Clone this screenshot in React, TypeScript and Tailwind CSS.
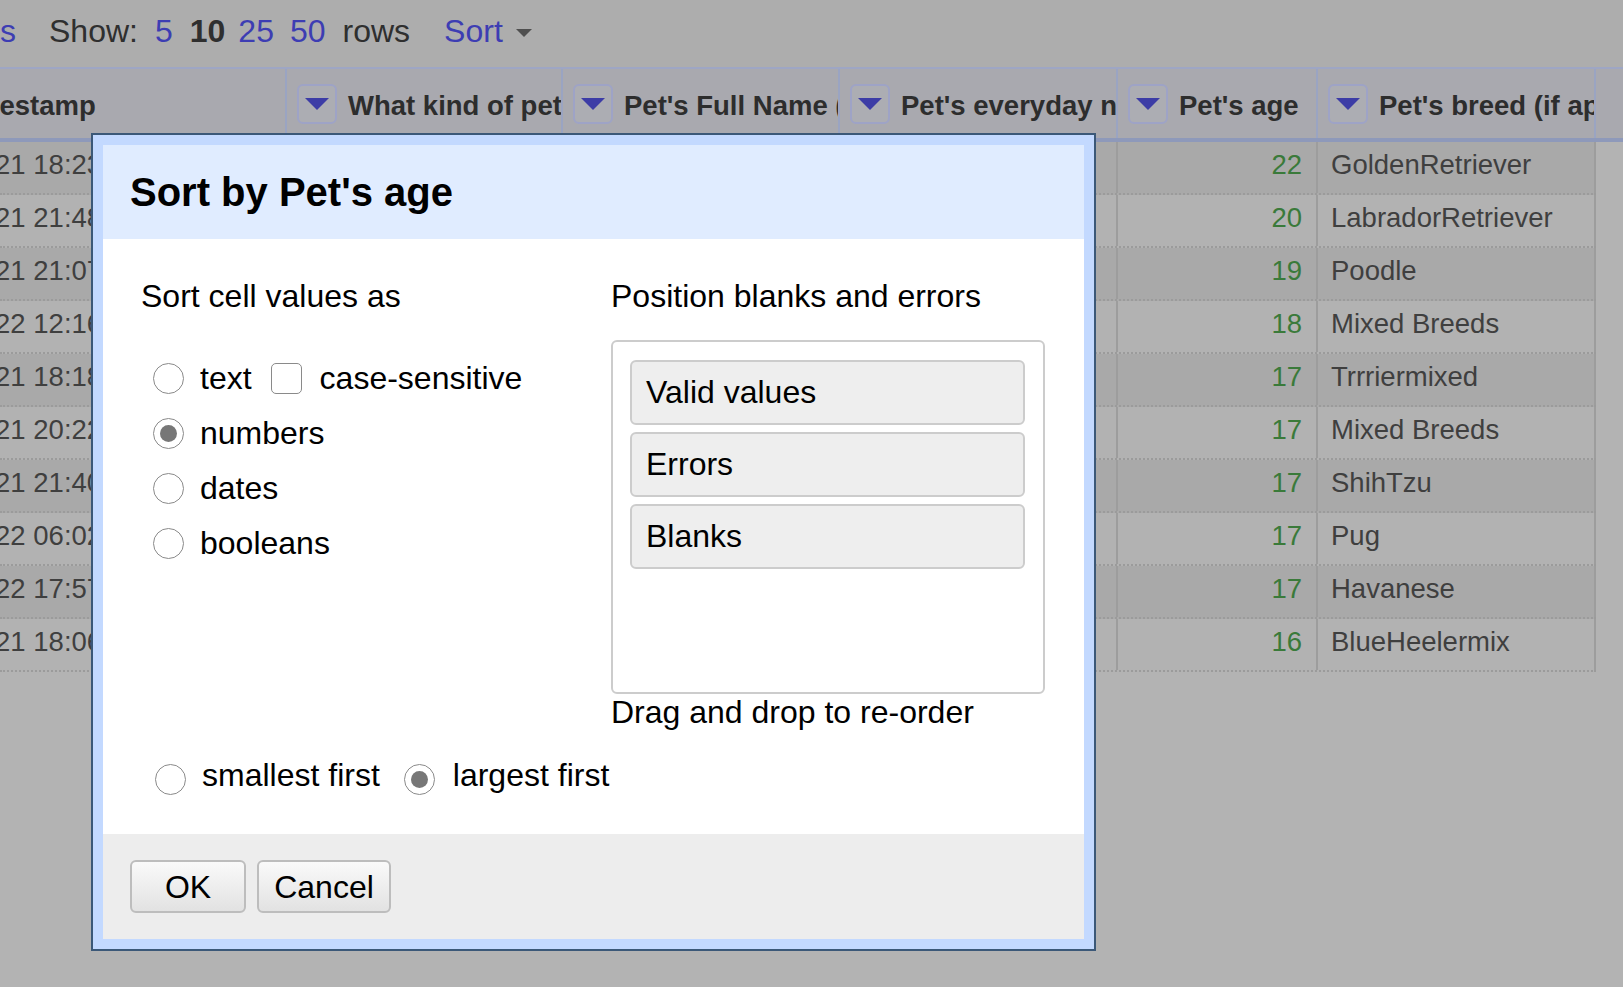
import React from "react";

const rows = [
  { ts: "2021-10-21 18:23:45", kind: "Dog", full: "Max", every: "Max", age: 22, breed: "GoldenRetriever" },
  { ts: "2021-10-21 21:48:12", kind: "Dog", full: "Bella", every: "Bell", age: 20, breed: "LabradorRetriever" },
  { ts: "2021-10-21 21:07:33", kind: "Dog", full: "Coco", every: "Coco", age: 19, breed: "Poodle" },
  { ts: "2021-10-22 12:16:08", kind: "Dog", full: "Buddy", every: "Bud", age: 18, breed: "Mixed Breeds" },
  { ts: "2021-10-21 18:18:51", kind: "Dog", full: "Rocky", every: "Rock", age: 17, breed: "Trrriermixed" },
  { ts: "2021-10-21 20:22:19", kind: "Dog", full: "Lucy", every: "Lu", age: 17, breed: "Mixed Breeds" },
  { ts: "2021-10-21 21:40:02", kind: "Dog", full: "Daisy", every: "Daisy", age: 17, breed: "ShihTzu" },
  { ts: "2021-10-22 06:02:44", kind: "Dog", full: "Otis", every: "Otis", age: 17, breed: "Pug" },
  { ts: "2021-10-22 17:57:30", kind: "Dog", full: "Milo", every: "Milo", age: 17, breed: "Havanese" },
  { ts: "2021-10-21 18:06:27", kind: "Dog", full: "Duke", every: "Duke", age: 16, breed: "BlueHeelermix" },
];

function HeaderButton() {
  return (
    <div className="w-[40px] h-[40px] shrink-0 rounded-[6px] border-2 border-[#9ea3c6] bg-[#acadb3] flex items-center justify-center">
      <svg width="24" height="12" viewBox="0 0 24 12">
        <path d="M0 0H24L12 12Z" fill="#3c3ca6" />
      </svg>
    </div>
  );
}

function HeaderCell({ label, w }: { label: string; w: string }) {
  return (
    <div className={`${w} shrink-0 h-full border-r-2 border-[#9aa4c2] pl-[10px] flex items-center overflow-hidden`}>
      <HeaderButton />
      <span className="ml-[11px] mt-[3px] font-bold text-[27.5px] leading-[31px] text-[#2d2d2d] whitespace-nowrap">
        {label}
      </span>
    </div>
  );
}

function Radio({ checked, className = "" }: { checked?: boolean; className?: string }) {
  return (
    <div
      className={`w-[31px] h-[31px] shrink-0 rounded-full border border-[#8a8a8a] bg-white flex items-center justify-center ${className}`}
    >
      {checked && <div className="w-[17px] h-[17px] rounded-full bg-[#777777]" />}
    </div>
  );
}

export default function App() {
  return (
    <div className="relative w-[1623px] h-[987px] overflow-hidden bg-[#b3b3b3] font-['Liberation_Sans',Arial,sans-serif]">
      {/* top bar */}
      <div className="h-[67px] bg-[#adadad] flex items-center pb-[4px] text-[32px] leading-[37px] text-[#2f2f2f] whitespace-nowrap">
        <span className="text-[#3d3db3]">s</span>
        <span className="ml-[33px]">Show:</span>
        <span className="ml-[17px] text-[#3d3db3]">5</span>
        <span className="ml-[17px] font-bold">10</span>
        <span className="ml-[13px] text-[#3d3db3]">25</span>
        <span className="ml-[16px] text-[#3d3db3]">50</span>
        <span className="ml-[17px]">rows</span>
        <span className="ml-[34px] text-[#3d3db3]">Sort</span>
        <svg className="ml-[13px] mt-[2px]" width="16" height="8" viewBox="0 0 16 8">
          <path d="M0 0H16L8 8Z" fill="#4f4f4f" />
        </svg>
      </div>

      {/* header row */}
      <div className="h-[75px] flex border-t-2 border-t-[#9ea6c4] border-b-4 border-b-[#8e99ba] bg-[#a9a9af]">
        <div className="w-[287px] shrink-0 h-full border-r-2 border-[#9aa4c2] flex items-center overflow-hidden">
          <span className="ml-[-49px] mt-[3px] font-bold text-[27.5px] leading-[31px] text-[#2d2d2d] whitespace-nowrap">
            Timestamp
          </span>
        </div>
        <HeaderCell w="w-[276px]" label="What kind of pet do you have?" />
        <HeaderCell w="w-[277px]" label="Pet's Full Name (as registered)" />
        <HeaderCell w="w-[278px]" label="Pet's everyday name" />
        <HeaderCell w="w-[200px]" label="Pet's age" />
        <HeaderCell w="w-[278px]" label="Pet's breed (if applicable)" />
        <div className="flex-1" />
      </div>

      {/* data rows */}
      <div className="w-[1596px] text-[27.5px] leading-[31px] text-[#3f3f3f]">
        {rows.map((r, i) => (
          <div
            key={i}
            className={`h-[53px] flex border-b-2 border-dotted border-[#9b9b9b] ${
              i % 2 === 0 ? "bg-[#a9a9a9]" : "bg-[#b2b2b2]"
            }`}
          >
            <div className="w-[287px] shrink-0 border-r-2 border-[#9d9d9d] pt-[7px] overflow-hidden whitespace-nowrap">
              <span className="block ml-[-115px]">{r.ts}</span>
            </div>
            <div className="w-[276px] shrink-0 border-r-2 border-[#9d9d9d] pt-[7px] pl-[13px] overflow-hidden whitespace-nowrap">
              {r.kind}
            </div>
            <div className="w-[277px] shrink-0 border-r-2 border-[#9d9d9d] pt-[7px] pl-[13px] overflow-hidden whitespace-nowrap">
              {r.full}
            </div>
            <div className="w-[278px] shrink-0 border-r-2 border-[#9d9d9d] pt-[7px] pl-[13px] overflow-hidden whitespace-nowrap">
              {r.every}
            </div>
            <div className="w-[200px] shrink-0 border-r-2 border-[#9d9d9d] pt-[7px] pr-[14px] text-right text-[#3a7a3a]">
              {r.age}
            </div>
            <div className="w-[278px] shrink-0 border-r-2 border-[#9d9d9d] pt-[7px] pl-[13px] overflow-hidden whitespace-nowrap">
              {r.breed}
            </div>
          </div>
        ))}
      </div>

      {/* dialog */}
      <div className="absolute left-[91px] top-[133px] w-[1005px] h-[818px] border-2 border-[#3b5878] bg-[#c3d9ff] p-[10px]">
        <div className="w-full h-full flex flex-col text-black">
          <div className="h-[94px] shrink-0 bg-[#e0ecff] pl-[27px] flex items-center">
            <h1 className="text-[40px] leading-[46px] font-bold">Sort by Pet's age</h1>
          </div>

          <div className="flex-1 bg-white pt-[39px] pl-[38px] pr-[38px] text-[32px] leading-[37px]">
            <div className="flex">
              <div className="w-[470px] shrink-0">
                <div>Sort cell values as</div>
                <div className="mt-[36px]">
                  <div className="h-[55px] flex items-center">
                    <Radio className="ml-[12px]" />
                    <span className="ml-[16px]">text</span>
                    <div className="ml-[19px] w-[31px] h-[31px] shrink-0 rounded-[5px] border border-[#8a8a8a] bg-white" />
                    <span className="ml-[18px]">case-sensitive</span>
                  </div>
                  <div className="h-[55px] flex items-center">
                    <Radio className="ml-[12px]" checked />
                    <span className="ml-[16px]">numbers</span>
                  </div>
                  <div className="h-[55px] flex items-center">
                    <Radio className="ml-[12px]" />
                    <span className="ml-[16px]">dates</span>
                  </div>
                  <div className="h-[55px] flex items-center">
                    <Radio className="ml-[12px]" />
                    <span className="ml-[16px]">booleans</span>
                  </div>
                </div>
              </div>

              <div className="w-[434px] shrink-0">
                <div>Position blanks and errors</div>
                <div className="mt-[25px] h-[354px] rounded-[6px] border-2 border-[#cccccc] pt-[18px] pl-[17px] pr-[18px] flex flex-col gap-[7px]">
                  {["Valid values", "Errors", "Blanks"].map((t) => (
                    <div
                      key={t}
                      className="h-[65px] shrink-0 rounded-[6px] border-2 border-[#cccccc] bg-[#eeeeee] pl-[14px] flex items-center"
                    >
                      {t}
                    </div>
                  ))}
                </div>
                <div>Drag and drop to re-order</div>
              </div>
            </div>

            <div className="mt-[25px] flex items-center">
              <Radio className="ml-[14px] mt-[8px]" />
              <span className="ml-[16px]">smallest first</span>
              <Radio className="ml-[24px] mt-[8px]" checked />
              <span className="ml-[18px]">largest first</span>
            </div>
          </div>

          <div className="h-[105px] shrink-0 bg-[#ededed] px-[27px] flex items-center gap-[11px] text-[32px]">
            <button className="w-[116px] h-[53px] rounded-[6px] border-2 border-[#bdbdbd] bg-gradient-to-b from-[#fafafa] to-[#e2e2e2] text-black">
              OK
            </button>
            <button className="w-[134px] h-[53px] rounded-[6px] border-2 border-[#bdbdbd] bg-gradient-to-b from-[#fafafa] to-[#e2e2e2] text-black">
              Cancel
            </button>
          </div>
        </div>
      </div>
    </div>
  );
}
